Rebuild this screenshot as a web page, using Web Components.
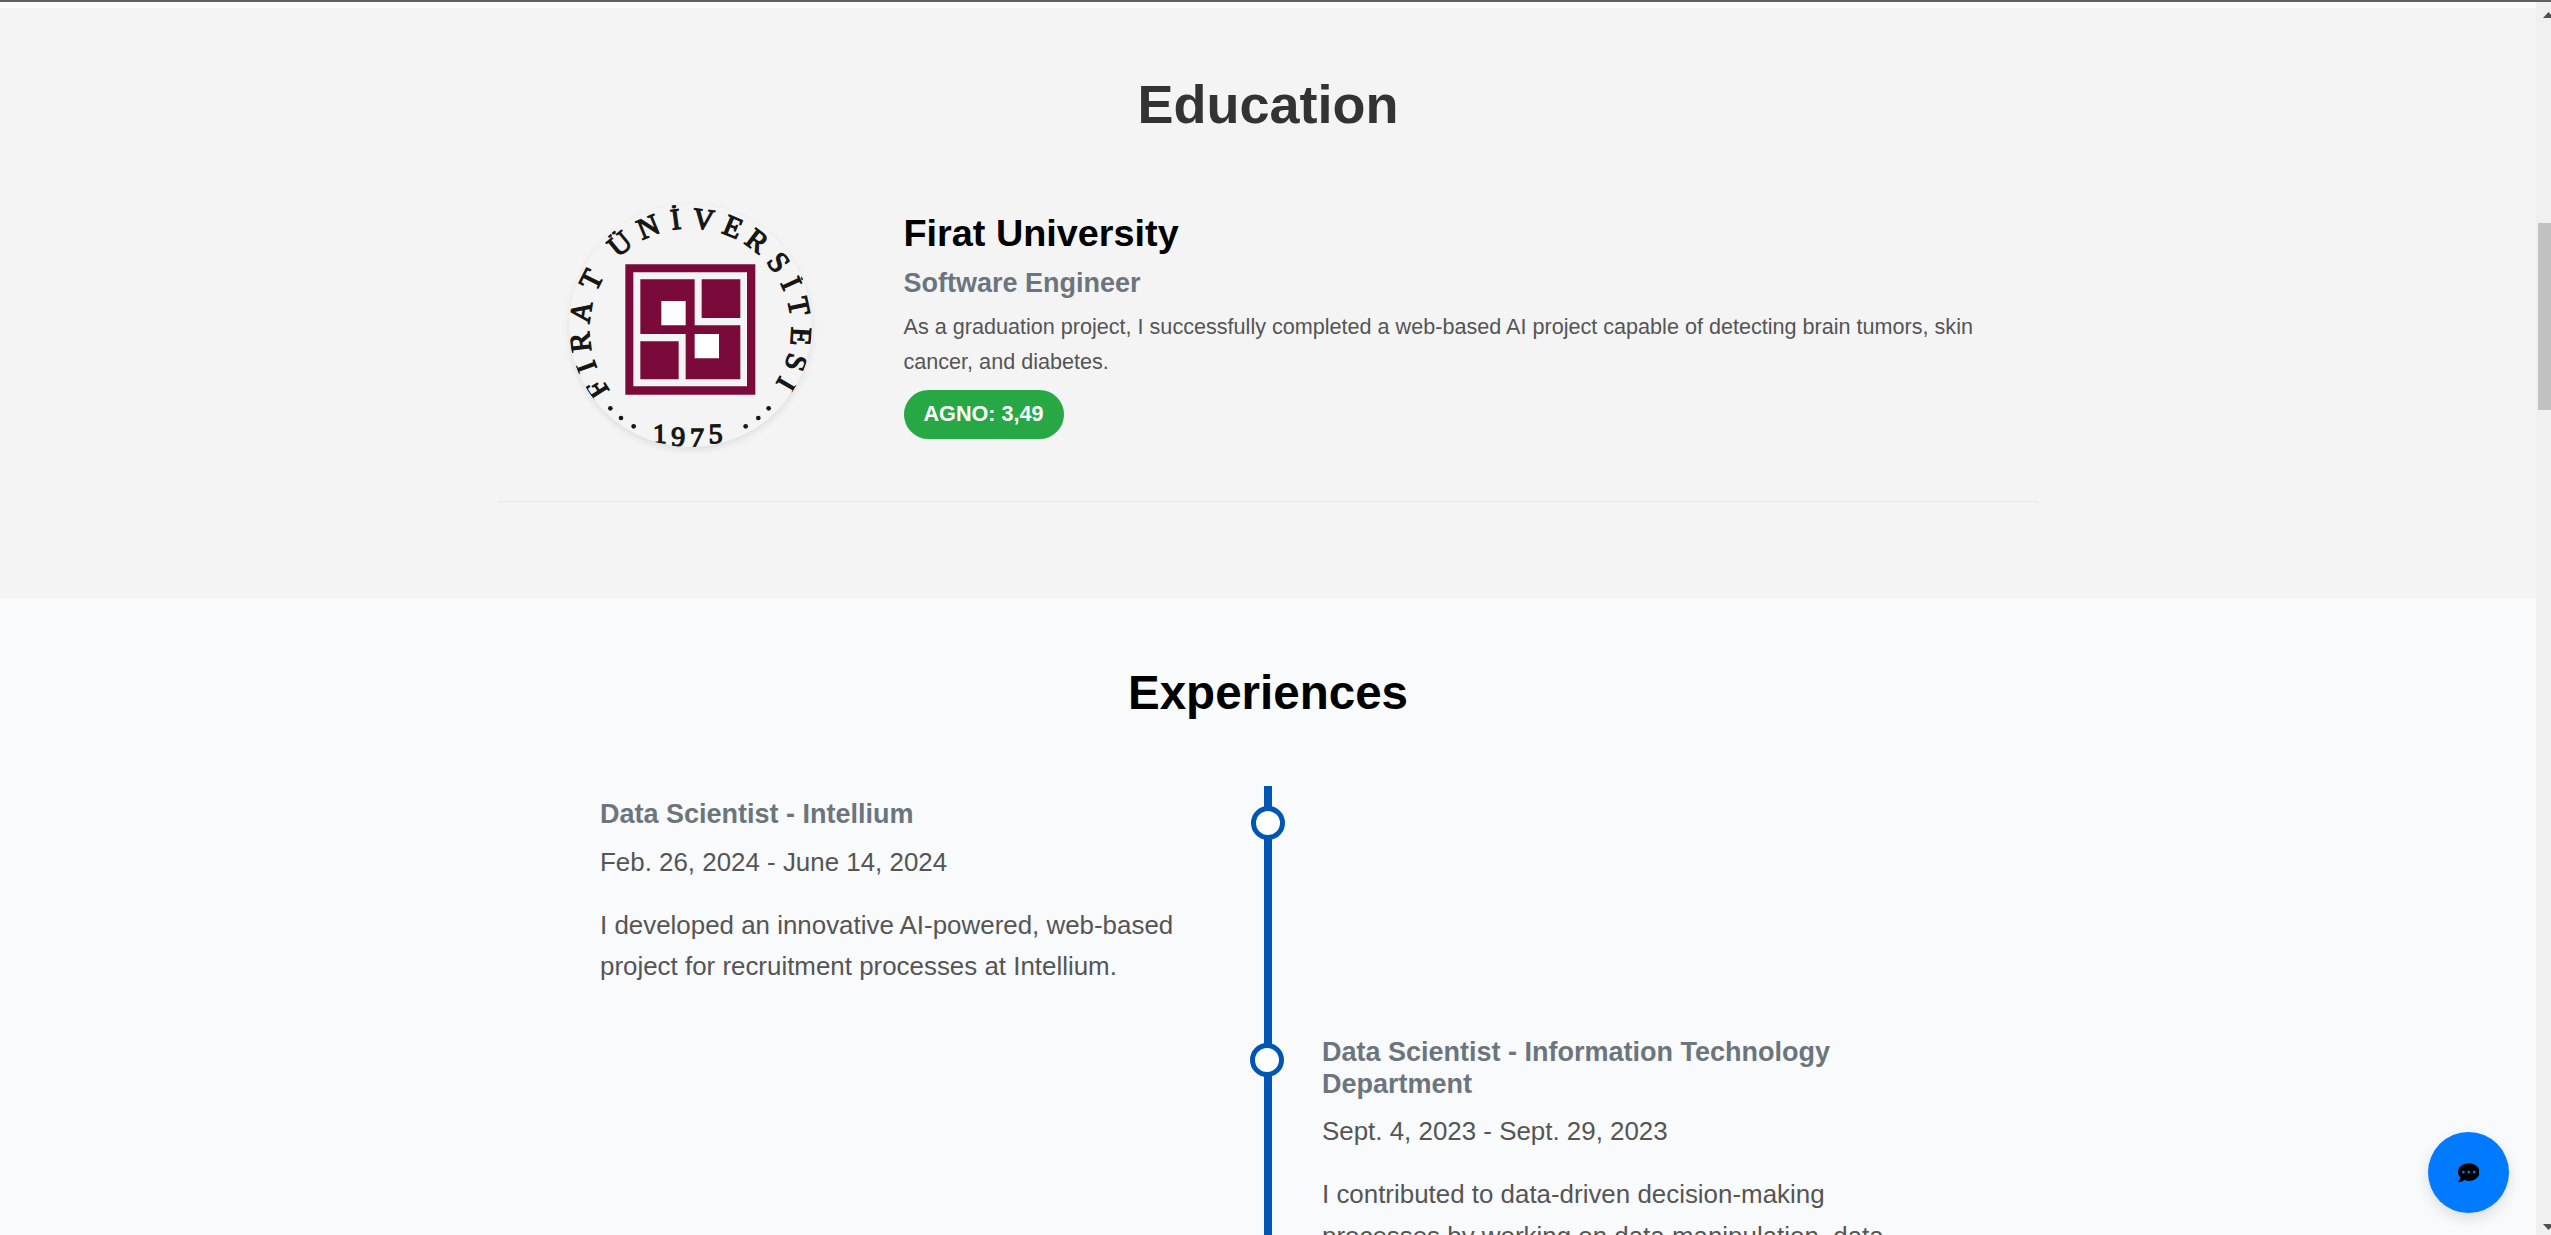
<!DOCTYPE html>
<html lang="en">
<head>
<meta charset="utf-8">
<title>Portfolio</title>
<style>
html{font-size:21.6px}
body{margin:0;height:1235px;overflow:hidden;font-family:"Liberation Sans",Arial,sans-serif;background:#f8fafc}
</style>
</head>
<body>
<portfolio-page>
  <education-section heading="Education">
    <education-entry school="Firat University" degree="Software Engineer" grade="AGNO: 3,49">
      <university-seal slot="logo"></university-seal>
      As a graduation project, I successfully completed a web-based AI project capable of detecting brain tumors, skin cancer, and diabetes.
    </education-entry>
  </education-section>
  <experience-section heading="Experiences">
    <timeline-item side="left" heading="Data Scientist - Intellium" dates="Feb. 26, 2024 - June 14, 2024">I developed an innovative AI-powered, web-based project for recruitment processes at Intellium.</timeline-item>
    <timeline-item side="right" heading="Data Scientist - Information Technology Department" dates="Sept. 4, 2023 - Sept. 29, 2023">I contributed to data-driven decision-making processes by working on data manipulation, data</timeline-item>
  </experience-section>
  <chat-button slot="overlay"></chat-button>
  <scroll-track slot="scroll"></scroll-track>
</portfolio-page>
<script>
const define = (name, html, setup) => customElements.define(name, class extends HTMLElement {
  connectedCallback() {
    if (this.shadowRoot) return;
    const root = this.attachShadow({mode: 'open'});
    root.innerHTML = html;
    root.querySelectorAll('[data-attr]').forEach(n => n.textContent = this.getAttribute(n.dataset.attr));
    if (setup) setup(root, this);
  }
});

define('portfolio-page', `
<style>
:host{display:flex;height:1235px;overflow:hidden;position:relative}
main{flex:1;min-width:0;overflow:hidden;display:flex;flex-direction:column}
.edge{position:absolute;left:0;right:0;top:0;height:2px;background:#606060;z-index:3}
</style>
<main><slot></slot></main><slot name="scroll"></slot><slot name="overlay"></slot><div class="edge"></div>`);

define('education-section', `
<style>
:host{display:block;flex:none;box-sizing:border-box;height:599px;background:#f4f4f4;border-top:8px solid #fcfcfc;padding-top:64px}
h2{margin:0 0 2.7rem;font-size:2.5rem;line-height:1.2;color:#333;text-align:center}
.wrap{width:1539px;margin:0 auto}
</style>
<h2 data-attr="heading"></h2><div class="wrap"><slot></slot></div>`);

define('education-entry', `
<style>
:host{display:flex;align-items:center;box-sizing:border-box;height:307px;padding-bottom:46px;border-bottom:1px solid #e8e8e8}
.logo{flex:0 0 384px;display:flex;justify-content:center}
.info{flex:0 0 1107px;margin-left:21px}
h3{margin:0 0 .5rem;font-size:1.75rem;line-height:1.2;color:#000}
h4{margin:0 0 .5rem;font-size:1.25rem;line-height:1.2;color:#6c757d}
p{margin:0 0 .5rem;font-size:1rem;line-height:1.6;color:#555}
.grade{display:block;width:max-content;box-sizing:border-box;height:49px;padding:0 20px;border-radius:27px;background:#28a745;color:#fff;font-weight:bold;font-size:1rem;line-height:48px}
</style>
<div class="logo"><slot name="logo"></slot></div>
<div class="info"><h3 data-attr="school"></h3><h4 data-attr="degree"></h4><p><slot></slot></p><span class="grade" data-attr="grade"></span></div>`);

define('university-seal', `
<style>
:host{display:block;width:243px;height:243px;border-radius:50%;overflow:hidden;box-shadow:0 3px 7px rgba(0,0,0,.09);background:#f4f4f4}
svg{display:block;width:243px;height:243px}
text{font-family:"Liberation Serif",serif;fill:#161613;stroke:#161613;stroke-width:3.8}
</style>
<svg viewBox="88 71 729 729">
  <g fill="#7a0a39">
    <path fill-rule="evenodd" d="M257 252H647V643H257ZM281 276V618H622V276Z"/>
    <path d="M302 297H465V435H602V597H438V461H302Z"/>
    <path d="M486 297H602V413H486ZM302 483H417V597H302Z"/>
  </g>
  <path fill="#fff" d="M365 362H438V435H365ZM465 461H538V534H465Z"/>
  <g fill="#161613"><circle cx="212" cy="684" r="7"/><circle cx="244" cy="713" r="7"/><circle cx="282" cy="738" r="7"/><circle cx="618" cy="738" r="7"/><circle cx="656" cy="713" r="7"/><circle cx="687" cy="684" r="7"/></g>
  <text class="name" font-size="89">FIRAT ÜNİVERSİTESİ</text>
  <text class="year" font-size="84" x="339 394 451 507" y="789 797 800 789" rotate="0 1 0 -1">1975</text>
</svg>`, root => {
  // Each letter is centred on its own angle around the ring, measured clockwise from the top.
  const angles = [-122.6,-109.9,-96.7,-81,-63.4,-50,-39.5,-22.3,-7.6,6.9,22.6,37.1,52.8,65.5,78,93.6,107.4,119.8];
  const widths = {F:.556,I:.333,R:.667,A:.722,T:.611,' ':.25,'Ü':.722,N:.722,'İ':.333,V:.722,E:.611,S:.556};
  const t = root.querySelector('.name'), xs = [], ys = [];
  [...t.textContent].forEach((c, i) => {
    const a = angles[i] * Math.PI / 180, half = widths[c] * 44.5, r = 303;
    xs.push((452 + r * Math.sin(a) - half * Math.cos(a)).toFixed(1));
    ys.push((447 - r * Math.cos(a) - half * Math.sin(a)).toFixed(1));
  });
  t.setAttribute('x', xs.join(' '));
  t.setAttribute('y', ys.join(' '));
  t.setAttribute('rotate', angles.join(' '));
});

define('experience-section', `
<style>
:host{display:block;flex:none;background:#f8fafc;padding-top:65px}
h2{margin:0 0 65px;font-size:2.2rem;line-height:57px;color:#000;text-align:center}
.line{position:relative;width:1458px;height:600px;margin:0 auto}
.line::before{content:"";position:absolute;left:725px;top:0;width:8px;height:100%;background:#0056b3}
</style>
<h2 data-attr="heading"></h2><div class="line"><slot></slot></div>`);

define('timeline-item', `
<style>
:host{display:flex;position:relative;box-sizing:border-box;padding:12.4px 0 13.5px;margin-bottom:22.3px}
:host([side=right]){justify-content:flex-end}
.card{box-sizing:border-box;width:729px;padding:0 54px 0 61px}
:host([side=right]) .card{padding:0 60px 0 54px}
h3{margin:0 0 .5rem;font-size:1.25rem;line-height:1.2;color:#6c757d}
p{margin:0;font-size:1.2rem;line-height:1.6;color:#555}
p + p{margin-top:1rem}
.dot{position:absolute;left:712px;top:20px;width:24px;height:24px;border:5px solid #0056b3;border-radius:50%;background:#fff}
:host([side=right]) .dot{left:711px}
</style>
<div class="card"><h3 data-attr="heading"></h3><p data-attr="dates"></p><p><slot></slot></p></div><div class="dot"></div>`);

define('chat-button', `
<style>
:host{position:absolute;right:42px;bottom:22px;width:81px;height:81px;border-radius:50%;background:#007bff;box-shadow:0 5px 14px rgba(0,0,0,.12);display:flex;align-items:center;justify-content:center}
svg{width:21.6px;height:21.6px;display:block}
</style>
<svg viewBox="0 0 512 512"><path d="M256 32C114.6 32 0 125.1 0 240c0 49.6 21.4 95 57 130.7C44.5 421.1 2.7 466 2.2 466.5c-2.2 2.3-2.8 5.7-1.5 8.7S4.8 480 8 480c66.3 0 116-31.8 140.6-51.4 32.7 12.3 69 19.4 107.4 19.4 141.4 0 256-93.1 256-208S397.4 32 256 32zM128 272c-17.7 0-32-14.3-32-32s14.3-32 32-32 32 14.3 32 32-14.3 32-32 32zm128 0c-17.7 0-32-14.3-32-32s14.3-32 32-32 32 14.3 32 32-14.3 32-32 32zm128 0c-17.7 0-32-14.3-32-32s14.3-32 32-32 32 14.3 32 32-14.3 32-32 32z"/></svg>`);

define('scroll-track', `
<style>
:host{display:flex;flex-direction:column;justify-content:space-between;flex:0 0 15px;height:1235px;box-sizing:border-box;padding:12px 0 5px;background:#f0f0f0;overflow:hidden}
svg{display:block;width:8px;height:6px;margin-left:7px;flex:none}
.thumb{height:187px;margin:205px 0 auto 2px;background:#c1c1c1;flex:none}
</style>
<svg viewBox="0 0 8 6"><path fill="#505050" d="M0 6L5.5 0L11 6Z"/></svg>
<div class="thumb"></div>
<svg viewBox="0 0 8 6"><path fill="#505050" d="M0 0H11L5.5 6Z"/></svg>`);
</script>
</body>
</html>
